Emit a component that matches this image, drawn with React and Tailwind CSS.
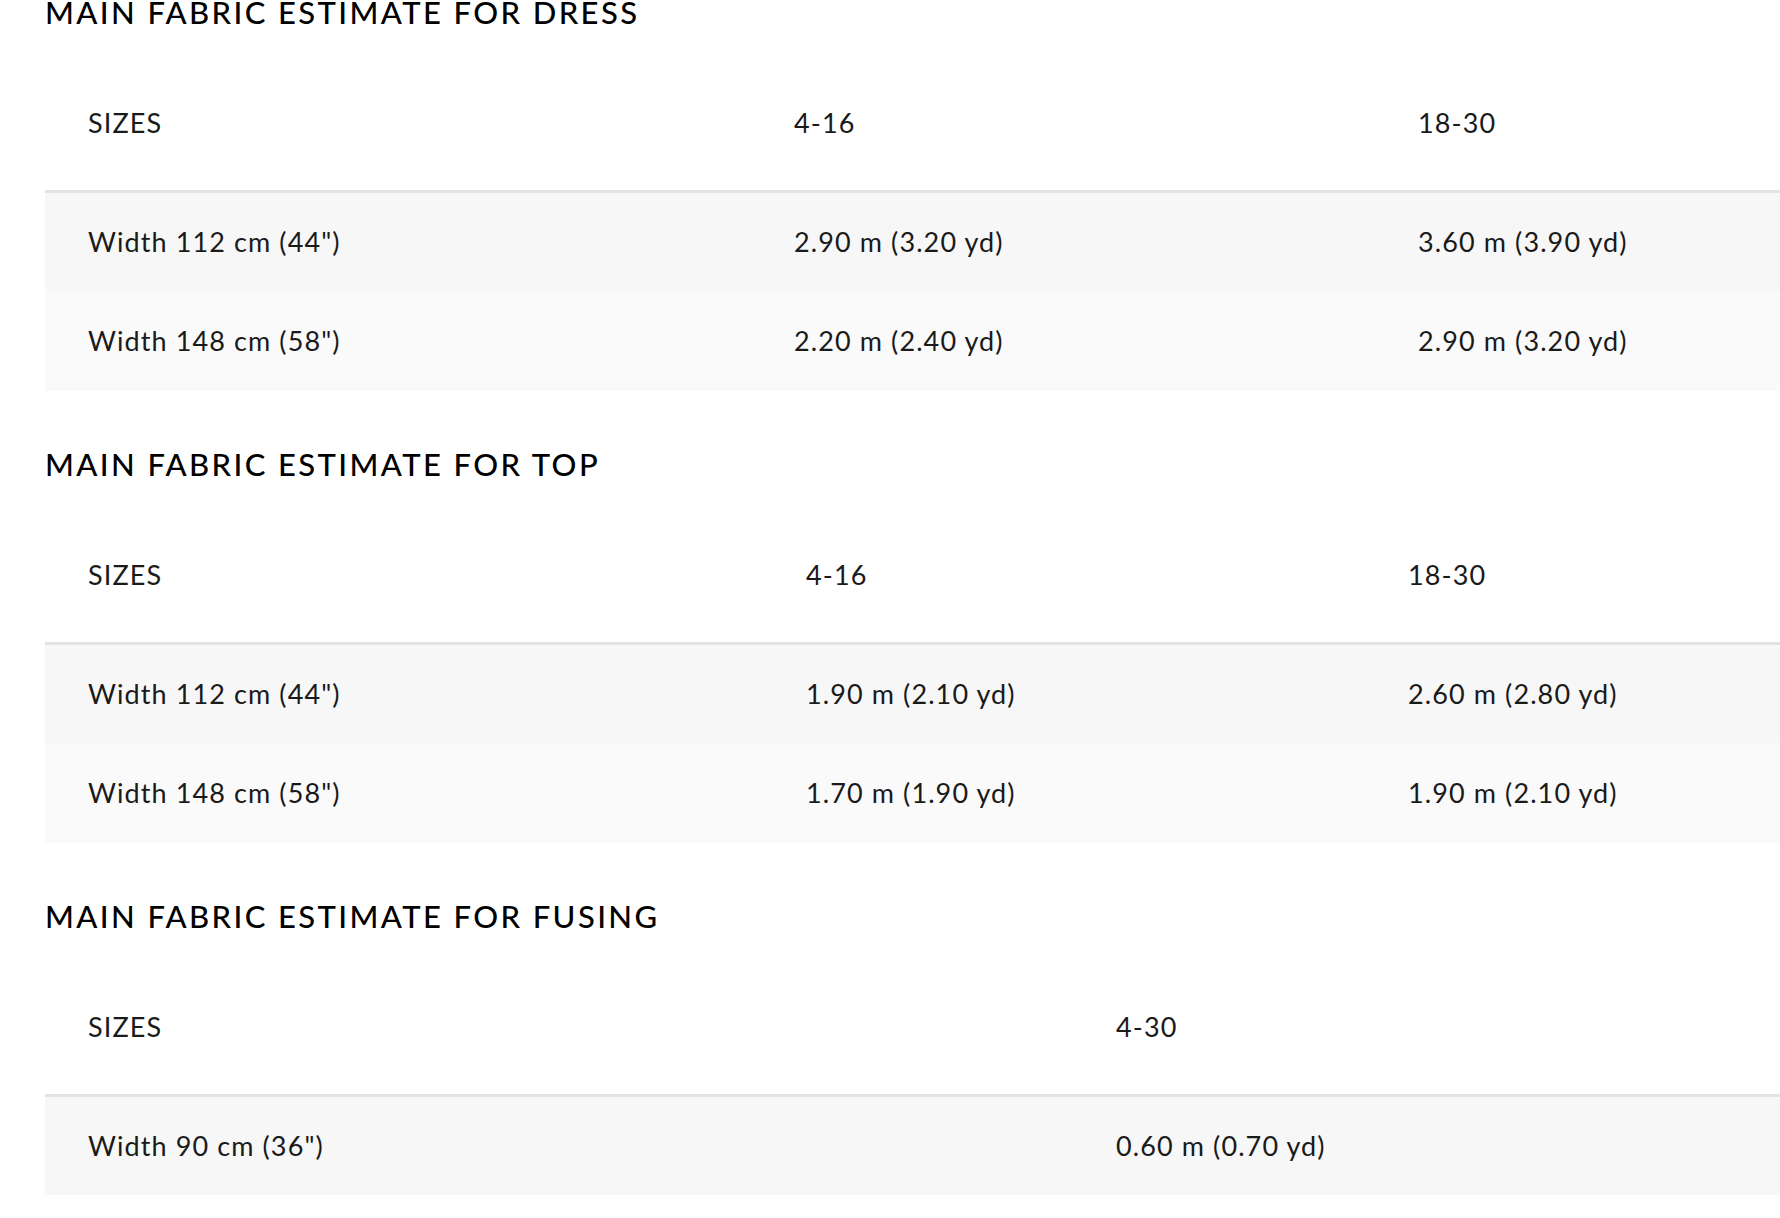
import React from 'react';

const sections = [
  {
    title: 'MAIN FABRIC ESTIMATE FOR DRESS',
    cols: ['w-[706px]', 'w-[624px]'],
    head: ['SIZES', '4-16', '18-30'],
    rows: [
      ['Width 112 cm (44")', '2.90 m (3.20 yd)', '3.60 m (3.90 yd)'],
      ['Width 148 cm (58")', '2.20 m (2.40 yd)', '2.90 m (3.20 yd)'],
    ],
  },
  {
    title: 'MAIN FABRIC ESTIMATE FOR TOP',
    cols: ['w-[718px]', 'w-[602px]'],
    head: ['SIZES', '4-16', '18-30'],
    rows: [
      ['Width 112 cm (44")', '1.90 m (2.10 yd)', '2.60 m (2.80 yd)'],
      ['Width 148 cm (58")', '1.70 m (1.90 yd)', '1.90 m (2.10 yd)'],
    ],
  },
  {
    title: 'MAIN FABRIC ESTIMATE FOR FUSING',
    cols: ['w-[1028px]'],
    head: ['SIZES', '4-30'],
    rows: [['Width 90 cm (36")', '0.60 m (0.70 yd)']],
  },
];

const rowBg = ['bg-[#f7f7f7]', 'bg-[#fafafa]'];

const EstimateTable = ({ section }) => (
  <section className="mb-[58px]">
    <h2 className="h-[30px] text-[31px] leading-[30px] font-medium tracking-[2.4px] text-black mb-[29px]">
      {section.title}
    </h2>
    <table className="w-full table-fixed border-collapse">
      <colgroup>
        {section.cols.map((c, i) => (
          <col key={i} className={c} />
        ))}
        <col />
      </colgroup>
      <thead>
        <tr className="h-[135px] border-b-[3px] border-[#e3e3e3]">
          {section.head.map((h, i) => (
            <th key={i} className="pl-[43px] text-left font-normal align-middle">
              {h}
            </th>
          ))}
        </tr>
      </thead>
      <tbody>
        {section.rows.map((r, i) => (
          <tr key={i} className={`h-[100px] ${rowBg[i % 2]}`}>
            {r.map((cell, j) => (
              <td key={j} className="pl-[43px] align-middle whitespace-nowrap">
                {cell}
              </td>
            ))}
          </tr>
        ))}
      </tbody>
    </table>
  </section>
);

export default function App() {
  return (
    <div
      className="w-full min-h-screen overflow-hidden bg-white pl-[45px] -mt-[3px] text-[#1a1a1a] text-[27px] tracking-[1.1px]"
      style={{ fontFamily: 'Lato, "Open Sans", sans-serif' }}
    >
      {sections.map((s) => (
        <EstimateTable key={s.title} section={s} />
      ))}
    </div>
  );
}
